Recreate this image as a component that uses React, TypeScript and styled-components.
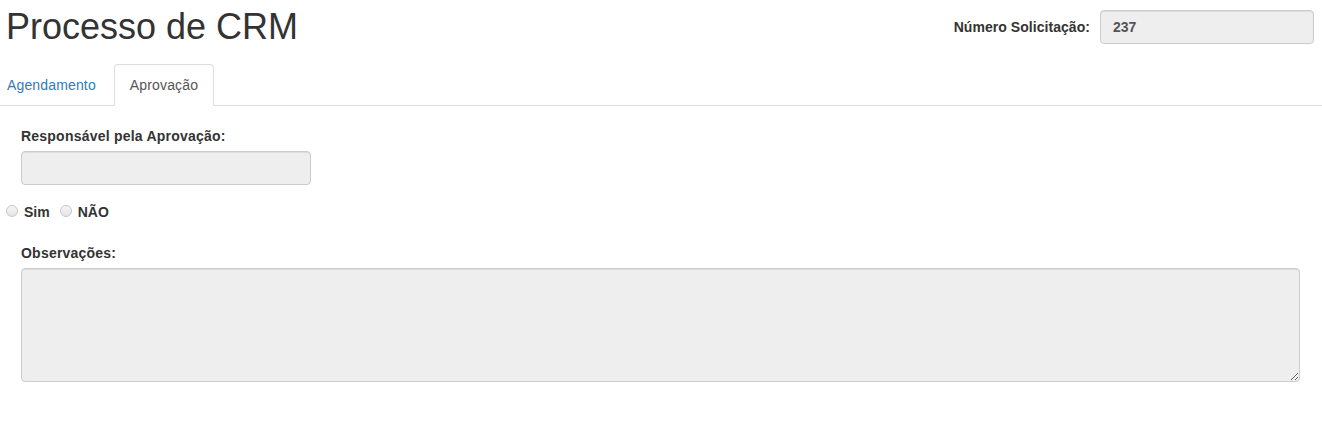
import React, { useState } from "react";
import styled, { createGlobalStyle } from "styled-components";

const GlobalStyle = createGlobalStyle`
  html, body {
    margin: 0;
    padding: 0;
    background: #fff;
  }
  body {
    font-family: "Liberation Sans", Arial, Helvetica, sans-serif;
    font-size: 14px;
    line-height: 20px;
    color: #333;
  }
  * {
    box-sizing: border-box;
  }
`;

const tabs = ["Agendamento", "Aprovação"];

const App: React.FC = () => {
  const [active, setActive] = useState(1);

  return (
    <Page>
      <GlobalStyle />
      <Header>
        <Title>Processo de CRM</Title>
        <RequestGroup>
          <Label as="span" tight>
            Número Solicitação:
          </Label>
          <ReadOnlyInput width="214px" value="237" readOnly bold />
        </RequestGroup>
      </Header>

      <TabList>
        {tabs.map((tab, i) => (
          <TabItem key={tab}>
            <TabLink active={i === active} onClick={() => setActive(i)}>
              {tab}
            </TabLink>
          </TabItem>
        ))}
      </TabList>

      <TabPane>
        <FormGroup>
          <Label>Responsável pela Aprovação:</Label>
          <ReadOnlyInput width="290px" value="" readOnly />
        </FormGroup>

        <RadioRow>
          <RadioOption>
            <RadioDot />
            <span>Sim</span>
          </RadioOption>
          <RadioOption>
            <RadioDot />
            <span>NÃO</span>
          </RadioOption>
        </RadioRow>

        <FormGroup>
          <Label>Observações:</Label>
          <TextArea readOnly />
        </FormGroup>
      </TabPane>
    </Page>
  );
};

const Page = styled.div`
  width: 100%;
  min-height: 445px;
  overflow: hidden;
`;

const Header = styled.div`
  display: flex;
  justify-content: space-between;
  align-items: flex-start;
  padding: 7px 8px 0 6px;
  margin-bottom: 17px;
`;

const Title = styled.h1`
  margin: 0;
  font-size: 36px;
  font-weight: 500;
  line-height: 40px;
  color: #333;
`;

const RequestGroup = styled.div`
  display: flex;
  align-items: center;
  gap: 10px;
  padding-top: 3px;
`;

const Label = styled.label<{ tight?: boolean }>`
  display: block;
  font-weight: bold;
  font-size: 14px;
  line-height: 20px;
  letter-spacing: ${(p) => (p.tight ? "0.05px" : "0.22px")};
  margin-bottom: ${(p) => (p.tight ? "0" : "5px")};
  color: #333;
`;

const ReadOnlyInput = styled.input<{ width: string; bold?: boolean }>`
  display: block;
  width: ${(p) => p.width};
  height: 34px;
  padding: 6px 12px;
  font-family: inherit;
  font-size: 14px;
  font-weight: ${(p) => (p.bold ? "bold" : "normal")};
  color: #555;
  background: #eee;
  border: 1px solid #ccc;
  border-radius: 4px;
  box-shadow: inset 0 1px 1px rgba(0, 0, 0, 0.075);
  outline: none;
`;

const TabList = styled.ul`
  display: flex;
  list-style: none;
  margin: 0 0 0 -9px;
  padding: 0;
  border-bottom: 1px solid #ddd;
`;

const TabItem = styled.li`
  margin-bottom: -1px;
`;

const TabLink = styled.a<{ active?: boolean }>`
  display: block;
  padding: 10px 15px;
  margin-right: 2px;
  line-height: 20px;
  letter-spacing: 0.15px;
  cursor: pointer;
  border: 1px solid ${(p) => (p.active ? "#ddd" : "transparent")};
  border-bottom-color: transparent;
  border-radius: 4px 4px 0 0;
  background: ${(p) => (p.active ? "#fff" : "transparent")};
  color: ${(p) => (p.active ? "#555" : "#337ab7")};
`;

const TabPane = styled.div`
  padding: 20px 22px 0 0;
`;

const FormGroup = styled.div`
  padding-left: 21px;
`;

const RadioRow = styled.div`
  display: flex;
  align-items: center;
  gap: 10px;
  padding-left: 6px;
  margin: 17px 0 21px;
  line-height: 20px;
`;

const RadioOption = styled.label`
  display: flex;
  align-items: center;
  gap: 6px;
  font-weight: bold;
  color: #333;
`;

const RadioDot = styled.span`
  display: inline-block;
  width: 12px;
  height: 12px;
  border-radius: 50%;
  border: 1px solid #c8c8c8;
  background: linear-gradient(#f6f6f6, #e4e4e4);
  margin-top: -3px;
`;

const TextArea = styled.textarea`
  display: block;
  width: 100%;
  height: 114px;
  padding: 6px 12px;
  font-family: inherit;
  font-size: 14px;
  color: #555;
  background: #eee;
  border: 1px solid #ccc;
  border-radius: 4px;
  box-shadow: inset 0 1px 1px rgba(0, 0, 0, 0.075);
  outline: none;
  resize: vertical;
`;

export default App;
